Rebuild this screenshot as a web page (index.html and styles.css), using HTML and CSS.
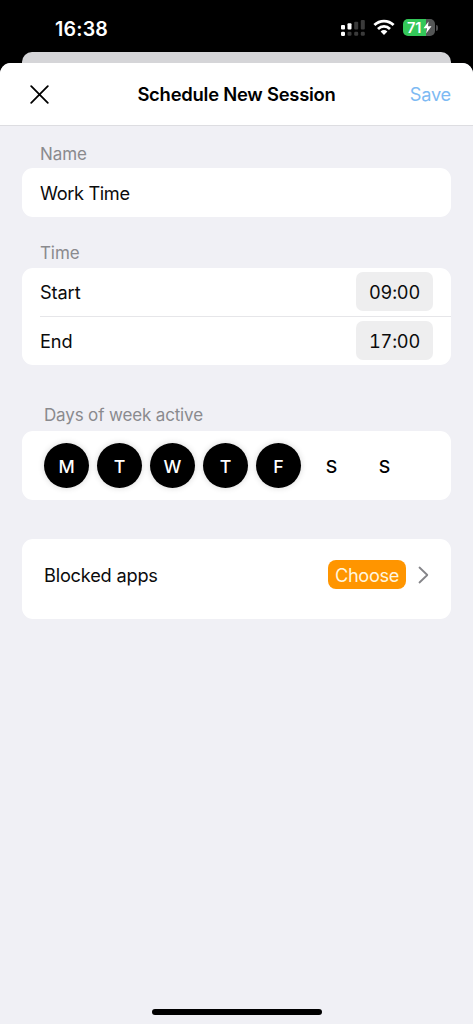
FILE: index.html
```html
<!DOCTYPE html>
<html lang="en">
<head>
<meta charset="utf-8">
<title>Schedule New Session</title>
<link rel="stylesheet" href="styles.css">
</head>
<body>
<div class="phone">
  <header class="status">
    <span class="clock">16:38</span>
    <svg class="signal" width="26" height="18" viewBox="0 0 26 18">
      <g fill="#fff"><rect x="1" y="6" width="4" height="4.5" rx="1"/><rect x="7.5" y="4.3" width="4" height="6.2" rx="1"/><rect x="1" y="12.8" width="4" height="4.2" rx="1.2"/></g>
      <g fill="#3b3b3b"><rect x="14.2" y="2.8" width="4" height="7.7" rx="1"/><rect x="20.8" y="1" width="4" height="9.5" rx="1"/><rect x="7.5" y="12.8" width="4" height="4" rx="1.2"/><rect x="14.2" y="12.8" width="4" height="4" rx="1.2"/><rect x="20.8" y="12.8" width="4" height="4" rx="1.2"/></g>
    </svg>
    <svg class="wifi" width="22" height="17" viewBox="0 0 22 17">
      <g fill="none" stroke="#fff" stroke-width="2.8"><path d="M1.4 6.1C6.8 .7 15.2 .7 20.6 6.1"/><path d="M5 9.9C8.5 6.5 13.5 6.5 17 9.9"/></g>
      <path d="M7.6 12.4Q11 9.6 14.4 12.4L11 15.9Z" fill="#fff"/>
    </svg>
    <div class="battery"><span class="charge">71</span>
      <svg class="bolt" width="9" height="13" viewBox="0 0 9 13"><path d="M5.6 .5L.5 7.3H4L3.1 12.5L8.5 5.3H5Z" fill="#fff"/></svg>
    </div>
    <span class="battery-tip"></span>
  </header>
  <div class="behind"></div>
  <main class="sheet">
    <div class="navbar">
      <svg class="close" width="19" height="19" viewBox="0 0 19 19"><path d="M1.2 1.2L17.8 17.8M17.8 1.2L1.2 17.8" stroke="#000" stroke-width="1.8" stroke-linecap="round"/></svg>
      <h1 class="title">Schedule New Session</h1>
      <span class="save">Save</span>
    </div>
    <div class="form">
      <div class="label name-label">Name</div>
      <div class="card row name-row"><span class="t-work">Work Time</span></div>
      <div class="label time-label">Time</div>
      <div class="card">
        <div class="row"><span class="t-start">Start</span><span class="time">09:00</span></div>
        <div class="row end-row"><span class="t-end">End</span><span class="time">17:00</span></div>
      </div>
      <div class="label days-label">Days of week active</div>
      <div class="card days">
        <span class="day on">M</span><span class="day on">T</span><span class="day on">W</span><span class="day on">T</span><span class="day on">F</span><span class="day">S</span><span class="day">S</span>
      </div>
      <div class="card apps">
        <span class="t-apps">Blocked apps</span>
        <span class="choose">Choose</span>
        <svg class="chevron" width="11" height="18" viewBox="0 0 11 18"><path d="M1.5 1.5L9.3 9L1.5 16.5" fill="none" stroke="#858589" stroke-width="1.8" stroke-linecap="round" stroke-linejoin="round"/></svg>
      </div>
    </div>
    <div class="home"></div>
  </main>
</div>
</body>
</html>
```
FILE: styles.css
```css
* { box-sizing: border-box; }
body { margin: 0; background: #000; font-family: Inter, "Liberation Sans", sans-serif; color: #0b0b0c; }
.phone { width: 473px; height: 1024px; display: flex; flex-direction: column; overflow: hidden; }
.status { height: 52px; flex: none; display: flex; padding-left: 55px; align-items: flex-start; color: #fff; }
.clock { width: 284.5px; padding-top: 17px; font-size: 19.6px; line-height: 25px; font-weight: 600; letter-spacing: 0.2px; }
.signal { margin-top: 19px; }
.wifi { margin: 19px 0 0 7px; }
.battery { margin: 19px 0 0 8.5px; width: 31.5px; height: 17px; border-radius: 5px; background: linear-gradient(90deg, #34c759 71%, #545656 71%); display: flex; align-items: center; padding-left: 4px; }
.charge { font-size: 14.5px; font-weight: 600; line-height: 17px; width: 15.5px; letter-spacing: 0; }
.bolt { flex: none; }
.battery-tip { width: 2px; height: 6px; margin: 25px 0 0 1px; background: #4a4a4c; border-radius: 0 2px 2px 0; }
.behind { height: 11px; flex: none; margin: 0 22px; background: #d5d5d8; border-radius: 10px 10px 0 0; }
.sheet { flex: 1; display: flex; flex-direction: column; background: #f0f0f5; border-radius: 11px 11px 0 0; overflow: hidden; }
.navbar { height: 63px; flex: none; display: grid; grid-template-columns: 76px 1fr 84px; align-items: center; padding: 0 22px 0 30px; background: #fff; border-bottom: 1px solid #dddde1; }
.title { margin: 0; font-size: 18.4px; line-height: 24px; font-weight: 600; letter-spacing: -0.23px; white-space: nowrap; color: #000; justify-self: center; }
.save { justify-self: end; font-size: 18.2px; letter-spacing: -0.2px; color: #7dbaf3; }
.form { flex: 1; padding: 0 22px; font-size: 18.2px; line-height: 24px; }
.label { height: 24px; padding-left: 18px; font-size: 17px; letter-spacing: -0.1px; color: #8a8a8e; }
.name-label { margin-top: 16px; }
.time-label { margin-top: 24px; }
.days-label { margin: 38px 0 4.5px; padding-left: 22px; letter-spacing: -0.15px; }
.card { background: #fff; border-radius: 11px; }
.name-label { margin-bottom: 2px; }
.time-label { margin-bottom: 2.5px; }
.row { height: 48.5px; display: flex; align-items: center; justify-content: space-between; padding: 0 18px; }
.name-row { height: 49px; }
.t-work { letter-spacing: -0.35px; }
.t-start, .t-end { letter-spacing: -0.1px; }
.end-row { margin-left: 18px; padding-left: 0; border-top: 1px solid #e6e6e9; }
.time { width: 77px; height: 39px; border-radius: 7px; background: #eeeeef; text-align: center; line-height: 41px; font-variant-numeric: tabular-nums; letter-spacing: -0.2px; }
.days { height: 68.5px; display: flex; align-items: center; padding-left: 22px; gap: 8px; }
.day { width: 45px; height: 45px; border-radius: 50%; text-align: center; line-height: 47px; font-size: 17.8px; font-weight: 550; color: #000; }
.on { background: #000; color: #fff; box-shadow: 0 0 6px rgba(0,0,0,.16); }
.apps { height: 80px; margin-top: 39px; display: flex; align-items: center; padding: 0 22px 8px; }
.t-apps { flex: 1; letter-spacing: -0.2px; }
.choose { width: 78px; height: 29px; border-radius: 8px; background: #ff9500; color: #fff6df; text-align: center; line-height: 31px; letter-spacing: -0.35px; }
.chevron { margin-left: 12px; }
.home { width: 170px; height: 6px; border-radius: 3px; background: #000; margin: 0 auto 9px; }
```
